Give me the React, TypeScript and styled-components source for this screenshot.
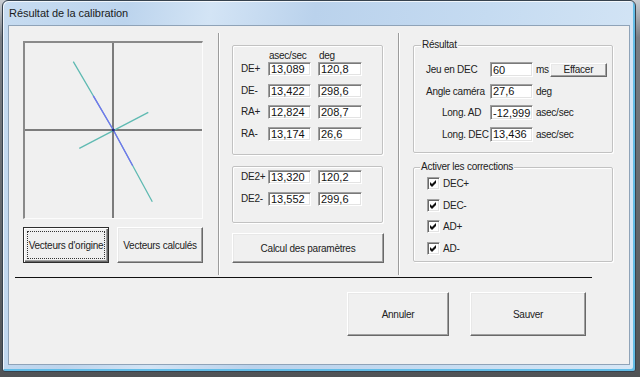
import React from 'react';
import styled, { createGlobalStyle, css } from 'styled-components';

const GlobalStyle = createGlobalStyle`
  html, body { margin: 0; padding: 0; }
  body {
    width: 640px;
    height: 377px;
    overflow: hidden;
    background: linear-gradient(180deg, #c9cdd2 0%, #7a7e84 10%, #505356 100%);
    font-family: "Liberation Sans", Arial, sans-serif;
  }
  * { box-sizing: border-box; }
`;

const Window = styled.div`
  margin-left: 2px;
  width: 634px;
  height: 372px;
  border: 1px solid #36424e;
  border-radius: 6px 6px 3px 3px;
  background: linear-gradient(100deg, #c7dcf1 0%, #bcd4ed 18%, #d3e4f5 30%, #bad2ec 45%, #c5dbf1 70%, #d7e7f6 100%);
  box-shadow: inset 1px 1px 0 rgba(255, 255, 255, 0.75), inset -2px -2px 0 #62bce6;
  display: flex;
  flex-direction: column;
  padding: 0 5px 6px 5px;
`;

const TitleBar = styled.div`
  height: 24px;
  display: flex;
  align-items: center;
  padding-left: 1px;
  font-size: 11px;
  color: #1b1b1b;
  letter-spacing: -0.05px;
`;

const Client = styled.div`
  flex: 1;
  background: #f0f0f0;
  border: 1px solid #8fa3b8;
  display: flex;
  flex-direction: column;
  font-size: 10px;
  letter-spacing: -0.25px;
  color: #222;
`;

const TopRow = styled.div`
  display: flex;
  margin-top: 7px;
  height: 242px;
`;

const Panel = styled.div<{ $w?: number; $padL: number; $padT: number }>`
  ${(p) => (p.$w ? css`width: ${p.$w}px;` : css`flex: 1;`)}
  padding: ${(p) => p.$padT}px 0 0 ${(p) => p.$padL}px;
  display: flex;
  flex-direction: column;
`;

const Separator = styled.div`
  width: 2px;
  border-left: 1px solid #9c9c9c;
  border-right: 1px solid #ffffff;
`;

const Plot = styled.div`
  width: 180px;
  height: 178px;
  border-top: 2px solid #8a8a8a;
  border-left: 2px solid #8a8a8a;
  border-right: 1px solid #fcfcfc;
  border-bottom: 1px solid #fcfcfc;
  svg { display: block; }
`;

const ButtonRow = styled.div<{ $gap: number; $top: number; $left?: number }>`
  display: flex;
  gap: ${(p) => p.$gap}px;
  margin-top: ${(p) => p.$top}px;
  padding-left: ${(p) => p.$left ?? 0}px;
`;

const Btn = styled.button<{ $w: number; $h: number; $default?: boolean; $ml?: number }>`
  width: ${(p) => p.$w}px;
  height: ${(p) => p.$h}px;
  margin-left: ${(p) => p.$ml ?? 0}px;
  padding: 0;
  font-family: "Liberation Sans", Arial, sans-serif;
  font-size: 10px;
  letter-spacing: -0.25px;
  color: #222;
  background: #f0f0f0;
  border: 1px solid;
  border-color: #ffffff #696969 #696969 #ffffff;
  box-shadow: inset -1px -1px 0 #a0a0a0, inset 1px 1px 0 #e8e8e8;
  ${(p) =>
    p.$default &&
    css`
      border: 1px solid #2e2e2e;
      box-shadow: inset 1px 1px 0 #ffffff, inset -1px -1px 0 #696969, inset -2px -2px 0 #a0a0a0;
      outline: 1px dotted #333;
      outline-offset: -5px;
    `}
`;

const Group = styled.div<{ $w: number; $h: number; $top: number }>`
  position: relative;
  width: ${(p) => p.$w}px;
  height: ${(p) => p.$h}px;
  margin-top: ${(p) => p.$top}px;
  border: 1px solid #c2c2c2;
  border-radius: 2px;
  box-shadow: 1px 1px 0 #ffffff, inset 1px 1px 0 #ffffff;
`;

const Legend = styled.span<{ $left: number }>`
  position: absolute;
  top: -7px;
  left: ${(p) => p.$left}px;
  padding: 0 1px;
  line-height: 12px;
  background: #f0f0f0;
`;

const ColHeads = styled.div`
  display: grid;
  grid-template-columns: 35px 50px 44px;
  height: 13px;
  line-height: 13px;
  margin-top: 3px;
  span { padding-left: 1px; }
`;

const ValueGrid = styled.div<{ $gap: number; $top?: number }>`
  display: grid;
  grid-template-columns: 35px 50px 44px;
  grid-auto-rows: 14px;
  row-gap: ${(p) => p.$gap}px;
  margin-top: ${(p) => p.$top ?? 0}px;
  align-items: center;
`;

const AxisLabel = styled.span`
  padding-left: 8px;
  line-height: 14px;
`;

const Field = styled.input<{ $w: number; $h?: number }>`
  width: ${(p) => p.$w}px;
  height: ${(p) => p.$h ?? 14}px;
  margin: 0;
  padding: 0 0 0 2px;
  font-family: "Liberation Sans", Arial, sans-serif;
  font-size: 11px;
  letter-spacing: 0;
  color: #111;
  background: #ffffff;
  border: 1px solid;
  border-color: #a0a0a0 #ffffff #ffffff #a0a0a0;
  box-shadow: inset 1px 1px 0 #7a7a7a, inset -1px -1px 0 #e3e3e3;
  outline: none;
`;

const ResultRows = styled.div`
  display: flex;
  flex-direction: column;
  gap: 6.67px;
  padding-top: 16px;
`;

const ResultRow = styled.div`
  display: flex;
  align-items: center;
  height: 15px;
`;

const RowLabel = styled.span<{ $indent: number }>`
  width: 76px;
  padding-left: ${(p) => p.$indent}px;
  white-space: nowrap;
`;

const Unit = styled.span`
  padding-left: 3px;
`;

const CheckList = styled.div`
  display: flex;
  flex-direction: column;
  gap: 8.67px;
  padding: 9px 0 0 13px;
`;

const CheckRow = styled.label`
  display: flex;
  align-items: center;
  gap: 3px;
  height: 13px;
`;

const CheckBox = styled.span`
  width: 13px;
  height: 13px;
  background: #ffffff;
  border: 1px solid;
  border-color: #a0a0a0 #ffffff #ffffff #a0a0a0;
  box-shadow: inset 1px 1px 0 #696969, inset -1px -1px 0 #e3e3e3;
  display: flex;
  align-items: center;
  justify-content: center;
  svg { display: block; }
`;

const Rule = styled.div`
  margin: 2px 0 0 6px;
  width: 577px;
  height: 1px;
  background: #111;
`;

const deRows = [
  ['DE+', '13,089', '120,8'],
  ['DE-', '13,422', '298,6'],
  ['RA+', '12,824', '208,7'],
  ['RA-', '13,174', '26,6'],
];

const de2Rows = [
  ['DE2+', '13,320', '120,2'],
  ['DE2-', '13,552', '299,6'],
];

const corrections = ['DEC+', 'DEC-', 'AD+', 'AD-'];

function Check() {
  return (
    <CheckBox>
      <svg width="7" height="7" viewBox="0 0 7 7">
        <polygon points="0,2 2,4 6,0 6,3 2,7 0,5" fill="#111" />
      </svg>
    </CheckBox>
  );
}

function VectorPlot() {
  return (
    <Plot>
      <svg width="177" height="175" viewBox="0 0 177 175">
        <line x1="88" y1="0" x2="88" y2="175" stroke="#7c7c7c" strokeWidth="2" />
        <line x1="0" y1="87" x2="177" y2="87" stroke="#7c7c7c" strokeWidth="2" />
        <polyline points="48.3,18.7 88.3,87 127.3,158.7" fill="none" stroke="#5fbab2" strokeWidth="1.3" />
        <polyline points="54.3,105.3 123.3,69.3" fill="none" stroke="#5fbab2" strokeWidth="1.3" />
        <polyline points="68.3,52.9 88.3,87 107.7,122.7" fill="none" stroke="#7272f2" strokeWidth="1.3" />
        <circle cx="88.3" cy="87" r="1.5" fill="#22227a" />
      </svg>
    </Plot>
  );
}

function ValueRows({ rows }: { rows: string[][] }) {
  return (
    <>
      {rows.map(([name, a, d]) => (
        <React.Fragment key={name}>
          <AxisLabel>{name}</AxisLabel>
          <Field $w={43} value={a} readOnly />
          <Field $w={44} value={d} readOnly />
        </React.Fragment>
      ))}
    </>
  );
}

export default function App() {
  return (
    <>
      <GlobalStyle />
      <Window>
        <TitleBar>Résultat de la calibration</TitleBar>
        <Client>
          <TopRow>
            <Panel $w={209} $padL={14} $padT={8}>
              <VectorPlot />
              <ButtonRow $gap={8} $top={8}>
                <Btn $w={86} $h={36} $default>
                  Vecteurs d'origine
                </Btn>
                <Btn $w={86} $h={36}>
                  Vecteurs calculés
                </Btn>
              </ButtonRow>
            </Panel>
            <Separator />
            <Panel $w={178} $padL={12} $padT={12}>
              <Group $w={151} $h={110} $top={0}>
                <ColHeads>
                  <span />
                  <span>asec/sec</span>
                  <span>deg</span>
                </ColHeads>
                <ValueGrid $gap={7.5}>
                  <ValueRows rows={deRows} />
                </ValueGrid>
              </Group>
              <Group $w={151} $h={57} $top={11}>
                <ValueGrid $gap={8} $top={3}>
                  <ValueRows rows={de2Rows} />
                </ValueGrid>
              </Group>
              <ButtonRow $gap={0} $top={10}>
                <Btn $w={152} $h={30}>
                  Calcul des paramètres
                </Btn>
              </ButtonRow>
            </Panel>
            <Separator />
            <Panel $padL={13} $padT={12}>
              <Group $w={200} $h={108} $top={0}>
                <Legend $left={7}>Résultat</Legend>
                <ResultRows>
                  <ResultRow>
                    <RowLabel $indent={12}>Jeu en DEC</RowLabel>
                    <Field $w={43} $h={15} value="60" readOnly />
                    <Unit>ms</Unit>
                    <Btn $w={57} $h={14} $ml={1}>
                      Effacer
                    </Btn>
                  </ResultRow>
                  <ResultRow>
                    <RowLabel $indent={12}>Angle caméra</RowLabel>
                    <Field $w={43} $h={15} value="27,6" readOnly />
                    <Unit>deg</Unit>
                  </ResultRow>
                  <ResultRow>
                    <RowLabel $indent={28}>Long. AD</RowLabel>
                    <Field $w={43} $h={15} value="-12,999" readOnly />
                    <Unit>asec/sec</Unit>
                  </ResultRow>
                  <ResultRow>
                    <RowLabel $indent={28}>Long. DEC</RowLabel>
                    <Field $w={43} $h={15} value="13,436" readOnly />
                    <Unit>asec/sec</Unit>
                  </ResultRow>
                </ResultRows>
              </Group>
              <Group $w={200} $h={95} $top={14}>
                <Legend $left={6}>Activer les corrections</Legend>
                <CheckList>
                  {corrections.map((c) => (
                    <CheckRow key={c}>
                      <Check />
                      {c}
                    </CheckRow>
                  ))}
                </CheckList>
              </Group>
            </Panel>
          </TopRow>
          <Rule />
          <ButtonRow $gap={21} $top={14} $left={338}>
            <Btn $w={102} $h={44}>
              Annuler
            </Btn>
            <Btn $w={116} $h={44}>
              Sauver
            </Btn>
          </ButtonRow>
        </Client>
      </Window>
    </>
  );
}
